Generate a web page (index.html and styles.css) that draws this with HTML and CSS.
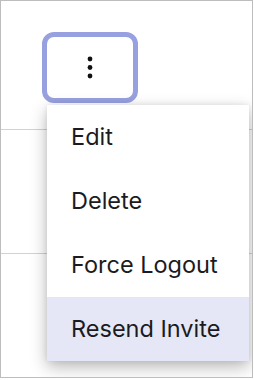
FILE: index.html
```html
<!DOCTYPE html>
<html>
<head>
<meta charset="utf-8">
<link rel="stylesheet" href="styles.css">
</head>
<body>
<div class="frame">
  <div class="row row-top">
    <button class="kebab" aria-label="More actions">
      <svg width="8" height="26" viewBox="0 0 8 26"><circle cx="4" cy="4" r="2.4" fill="#111"/><circle cx="4" cy="12.5" r="2.4" fill="#111"/><circle cx="4" cy="21" r="2.4" fill="#111"/></svg>
    </button>
  </div>
  <div class="row row-mid"></div>
  <div class="row row-bot"></div>
  <ul class="menu">
    <li class="item">Edit</li>
    <li class="item">Delete</li>
    <li class="item">Force Logout</li>
    <li class="item active">Resend Invite</li>
  </ul>
</div>
</body>
</html>
```
FILE: styles.css
```css
* { box-sizing: border-box; }
html, body { margin: 0; padding: 0; background: #fff; }
.frame {
  position: relative;
  width: 253px;
  height: 378px;
  border: 1px solid #bdbdbd;
  overflow: hidden;
  background: #fff;
}
.row { border-bottom: 1px solid #cdd0e8; }
.row-top {
  height: 129px;
  padding: 31px 0 0 41px;
}
.row-mid { height: 124px; }
.row-bot { border-bottom: none; }
.kebab {
  display: flex;
  align-items: center;
  justify-content: center;
  width: 96px;
  height: 71px;
  border: 5px solid #98a1df;
  border-radius: 12px;
  background: #fff;
  padding: 0;
  margin: 0;
}
.kebab svg { display: block; }
.menu {
  position: absolute;
  left: 46px;
  top: 104px;
  width: 202px;
  margin: 0;
  padding: 0;
  list-style: none;
  background: #fff;
  box-shadow: 0 6px 16px rgba(0,0,0,0.28), 0 0 6px rgba(0,0,0,0.08);
}
.item {
  height: 64px;
  line-height: 64px;
  padding-left: 24px;
  font-family: Inter, "Noto Sans", sans-serif;
  font-size: 23.5px;
  color: #1b1b1f;
}
.item.active { background: #e6e7f6; }
```
